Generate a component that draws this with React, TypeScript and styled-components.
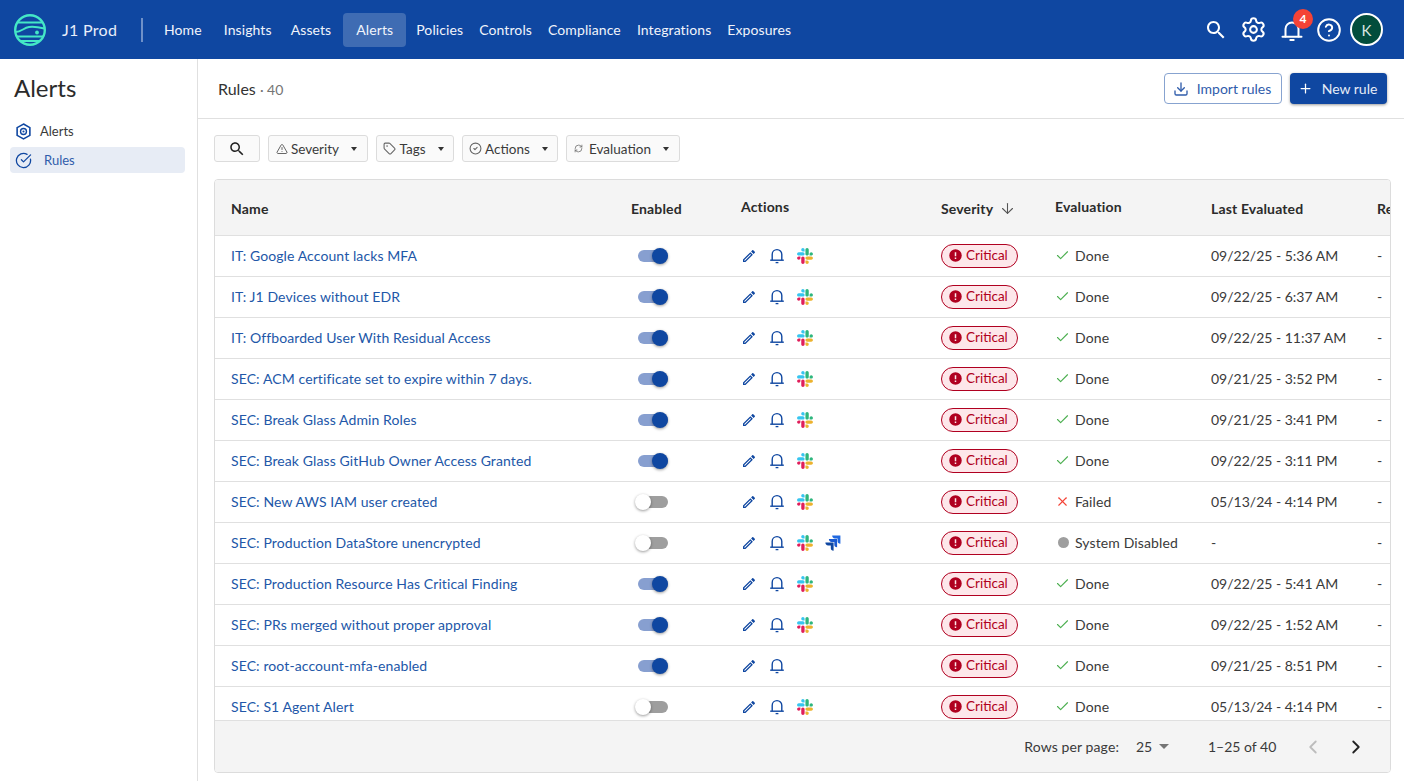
import React from 'react';
import styled, { createGlobalStyle } from 'styled-components';
import { Settings, CircleHelp, Plus, Download, ChevronLeft, ChevronRight, ArrowDown, Check, X, TriangleAlert, Tag, CircleCheck, CircleCheckBig, RefreshCw } from 'lucide-react';

const Global = createGlobalStyle`
  html, body { margin: 0; padding: 0; height: 100%; background: #fff; overflow: hidden; }
  body { font-family: Lato, "Open Sans", sans-serif; color: #2b2b2b; }
  * { box-sizing: border-box; }
`;
const Page = styled.div`width: 1404px; height: 781px; display: flex; flex-direction: column; overflow: hidden;`;
const TopBar = styled.header`height: 59px; flex: none; background: #0f47a1; display: flex; align-items: center; padding: 0 21px 0 14px; color: #fff;`;
const Logo = styled.svg`width: 34px; height: 34px; flex: none;`;
const Brand = styled.div`font-size: 16px; letter-spacing: 0.3px; margin-left: 14px; width: 79px; color: #e8eefa;`;
const Divider = styled.div`width: 2px; height: 24px; background: #6f91c9; margin-right: 13px;`;
const Nav = styled.nav`display: flex; align-items: center;`;
const NavItem = styled.div<{ $active?: boolean; $before?: number; $after?: number }>`
  font-size: 14px; letter-spacing: 0.1px; height: 34px; display: flex; align-items: center; padding: 0 ${p => (p.$active ? '13px' : '8px')};
  margin-left: ${p => p.$before || 0}px; margin-right: ${p => p.$after || 0}px; border-radius: 4px; color: #f1f4fb;
  background: ${p => (p.$active ? '#3f6cb3' : 'transparent')};
`;
const TopActions = styled.div`margin-left: auto; display: flex; align-items: center;`;
const TopIcon = styled.div<{ $w: number }>`width: ${p => p.$w}px; display: flex; justify-content: center; position: relative;`;
const TopSvg = styled.svg<{ $s: number }>`width: ${p => p.$s}px; height: ${p => p.$s}px; display: block;`;
const Badge = styled.span`position: absolute; top: -9px; left: 20px; width: 20px; height: 20px; border-radius: 50%; background: #f44336; color: #fff; font-size: 12px; font-weight: 700; display: flex; align-items: center; justify-content: center;`;
const Avatar = styled.div`width: 33px; height: 33px; border-radius: 50%; background: #024d3c; border: 2px solid #fff; color: #d8e6e0; display: flex; align-items: center; justify-content: center; font-size: 15px; margin-left: 3px;`;
const Body = styled.div`flex: 1; display: flex; min-height: 0;`;
const Sidebar = styled.aside`width: 198px; flex: none; border-right: 1px solid #e0e0e0; padding: 0 12px 0 10px;`;
const SideTitle = styled.h1`font-size: 24px; font-weight: 400; margin: 0; padding: 14px 0 0 4px; height: 59px; line-height: 30px; color: #2b2b2b;`;
const SideItem = styled.div<{ $active?: boolean }>`
  height: 26px; margin-bottom: 3px; display: flex; align-items: center; font-size: 13px; border-radius: 4px; padding-left: 5px;
  color: ${p => (p.$active ? '#2f5cab' : '#3a3a3a')}; background: ${p => (p.$active ? '#e7ecf5' : 'transparent')};
  gap: ${p => (p.$active ? '12px' : '8px')};
  svg { flex: none; }
`;
const Main = styled.main`flex: 1; min-width: 0; display: flex; flex-direction: column; padding-bottom: 8px;`;
const MainHead = styled.div`height: 60px; flex: none; border-bottom: 1px solid #e0e0e0; display: flex; align-items: center; padding: 0 17px 0 20px;`;
const HeadTitle = styled.div`font-size: 16px; color: #333;`;
const HeadCount = styled.span`font-size: 14px; color: #757575;`;
const HeadActions = styled.div`margin-left: auto; display: flex; gap: 8px;`;
const OutlineBtn = styled.button`height: 31px; width: 118px; border: 1px solid #87a3d0; border-radius: 4px; background: #fff; color: #2f5cab; font: 14px Lato, sans-serif; display: flex; align-items: center; justify-content: center; gap: 8px; padding: 0 2px 0 0;`;
const SolidBtn = styled.button`height: 31px; width: 97px; border: none; border-radius: 4px; background: #0f47a1; color: #e6ecf7; font: 14px Lato, sans-serif; display: flex; align-items: center; justify-content: center; gap: 9px; padding: 0 2px 0 0; box-shadow: 0 1px 3px rgba(0,0,0,.4);`;
const Filters = styled.div`height: 60px; flex: none; display: flex; align-items: center; gap: 8px; padding: 0 0 1px 16px;`;
const Chip = styled.div<{ $w: number; $plain?: boolean }>`height: 27px; width: ${p => p.$w}px; border: 1px solid #dcdcdc; border-radius: 3px; background: #fafafa; display: flex; align-items: center; justify-content: center; gap: 3px; padding-right: ${p => (p.$plain ? 0 : 3)}px; font-size: 13.5px; color: #3a3a3a; svg { flex: none; }`;
const Caret = styled.span<{ $color?: string; $w?: number }>`width: 0; height: 0; border-left: ${p => (p.$w || 7) / 2}px solid transparent; border-right: ${p => (p.$w || 7) / 2}px solid transparent; border-top: ${p => ((p.$w || 7) > 7 ? 5 : 4)}px solid ${p => p.$color || '#333'}; margin-left: ${p => ((p.$w || 7) > 7 ? 7 : 9)}px;`;
const TableCard = styled.div`flex: 1; min-height: 0; margin: 0 13px 0 16px; border: 1px solid #dcdcdc; border-radius: 4px; display: flex; flex-direction: column; overflow: hidden;`;
const Scroller = styled.div`flex: 1; min-height: 0; overflow: hidden;`;
const Table = styled.table`border-collapse: collapse; table-layout: fixed; width: 1300px; font-size: 14px;`;
const Th = styled.th<{ $w: number; $up?: boolean }>`width: ${p => p.$w}px; height: 55px; background: #f4f4f4; border-bottom: 1px solid #e0e0e0; text-align: left; padding: ${p => (p.$up ? '0 0 2px 16px' : '3px 0 0 16px')}; font-weight: 700; font-size: 14px; letter-spacing: 0.15px; color: #2b2b2b; white-space: nowrap; overflow: hidden;`;
const SortLabel = styled.span`display: inline-flex; align-items: center; gap: 6px;`;
const Td = styled.td`height: 41px; border-bottom: 1px solid #e0e0e0; padding: 0 0 0 16px; white-space: nowrap; overflow: hidden; color: #3a3a3a;`;
const RuleLink = styled.a`color: #2257a8; font-size: 14px; letter-spacing: 0.1px;`;
const Toggle = styled.div<{ $on: boolean }>`position: relative; width: 30px; height: 12px; margin-left: 7px; border-radius: 6px; background: ${p => (p.$on ? '#879fd0' : '#9e9e9e')};`;
const Knob = styled.span<{ $on: boolean }>`position: absolute; top: -2px; width: 16px; height: 16px; border-radius: 50%; ${p => (p.$on ? 'right: 0; background: #0f47a1;' : 'left: -3px; background: #fff;')} box-shadow: 0 1px 3px rgba(0,0,0,.4);`;
const ActionIcons = styled.div`display: flex; align-items: center; gap: 12px;`;
const IconSlot = styled.svg`width: 16px; height: 16px; flex: none; display: block;`;
const Pill = styled.span`display: inline-flex; align-items: center; height: 24px; width: 77px; border: 1px solid #b00020; border-radius: 12px; background: #fde7ea; color: #b00020; font-size: 13.5px; padding: 0 0 1px 6px; gap: 3px;`;
const EvalCell = styled.div`display: flex; align-items: center; gap: 5px; font-size: 14px; letter-spacing: 0.12px;`;
const Dot = styled.span`width: 11px; height: 11px; margin: 0 1px 0 3px; border-radius: 50%; background: #9e9e9e;`;
const Footer = styled.div`height: 52px; flex: none; background: #f4f4f4; border-top: 1px solid #e0e0e0; display: flex; align-items: center; justify-content: flex-end; padding: 0 23px 0 0; font-size: 14px; color: #3a3a3a;`;
const RowsLabel = styled.span`letter-spacing: 0.1px;`;
const PageSize = styled.div`display: flex; align-items: center; margin-left: 17px; width: 53px;`;
const PageRange = styled.span`margin-left: 19px; width: 87px;`;
const PageNav = styled.div`display: flex; align-items: center; gap: 21px; margin-left: 7px;`;

const navItems: { label: string; before?: number; after?: number; active?: boolean }[] = [
  { label: 'Home', after: 6 },
  { label: 'Insights', after: 3 },
  { label: 'Assets' },
  { label: 'Alerts', before: 4, after: 2, active: true },
  { label: 'Policies' },
  { label: 'Controls' },
  { label: 'Compliance' },
  { label: 'Integrations' },
  { label: 'Exposures' },
];

const rows: [string, boolean, boolean, boolean, string, string][] = [
  ['IT: Google Account lacks MFA', true, true, false, 'Done', '09/22/25 - 5:36 AM'],
  ['IT: J1 Devices without EDR', true, true, false, 'Done', '09/22/25 - 6:37 AM'],
  ['IT: Offboarded User With Residual Access', true, true, false, 'Done', '09/22/25 - 11:37 AM'],
  ['SEC: ACM certificate set to expire within 7 days.', true, true, false, 'Done', '09/21/25 - 3:52 PM'],
  ['SEC: Break Glass Admin Roles', true, true, false, 'Done', '09/21/25 - 3:41 PM'],
  ['SEC: Break Glass GitHub Owner Access Granted', true, true, false, 'Done', '09/22/25 - 3:11 PM'],
  ['SEC: New AWS IAM user created', false, true, false, 'Failed', '05/13/24 - 4:14 PM'],
  ['SEC: Production DataStore unencrypted', false, true, true, 'System Disabled', '-'],
  ['SEC: Production Resource Has Critical Finding', true, true, false, 'Done', '09/22/25 - 5:41 AM'],
  ['SEC: PRs merged without proper approval', true, true, false, 'Done', '09/22/25 - 1:52 AM'],
  ['SEC: root-account-mfa-enabled', true, false, false, 'Done', '09/21/25 - 8:51 PM'],
  ['SEC: S1 Agent Alert', false, true, false, 'Done', '05/13/24 - 4:14 PM'],
];

const MuiSearch = ({ size, color }: { size: number; color: string }) => (
  <TopSvg $s={size} viewBox="0 0 24 24" fill={color}>
    <path d="M15.5 14h-.79l-.28-.27C15.41 12.59 16 11.11 16 9.5 16 5.91 13.09 3 9.5 3S3 5.91 3 9.5 5.91 16 9.5 16c1.61 0 3.09-.59 4.23-1.57l.27.28v.79l5 4.99L20.49 19l-4.99-5zm-6 0C7.01 14 5 11.99 5 9.5S7.01 5 9.5 5 14 7.01 14 9.5 11.99 14 9.5 14z" />
  </TopSvg>
);
const TopBell = () => (
  <TopSvg $s={24} viewBox="0 0 24 24" fill="none" stroke="#fff" strokeWidth="2" strokeLinecap="round">
    <path d="M5.5 18.5V11a6.5 6.5 0 0 1 13 0v7.5" />
    <path d="M2.5 18.8h19" />
    <path d="M10.3 22h3.4" />
  </TopSvg>
);
const PencilIcon = () => (
  <IconSlot viewBox="0 0 24 24" fill="#0f47a1"><path d="M14.06 9.02l.92.92L5.92 19H5v-.92l9.06-9.06M17.66 3c-.25 0-.51.1-.7.29l-1.83 1.83 3.75 3.75 1.83-1.83c.39-.39.39-1.02 0-1.41l-2.34-2.34c-.2-.2-.45-.29-.71-.29zm-3.6 3.19L3 17.25V21h3.75L17.81 9.94l-3.75-3.75z" /></IconSlot>
);
const BellIcon = () => (
  <IconSlot viewBox="0 0 16 16" fill="none" stroke="#0f47a1" strokeWidth="1.4">
    <path d="M3.2 12V6.4a4.8 4.8 0 0 1 9.6 0V12" /><path d="M1.2 12.2h13.6" /><path d="M6.6 14.6h2.8" strokeWidth="1.3" />
  </IconSlot>
);
const SlackIcon = () => (
  <IconSlot viewBox="0 0 127 127">
    <path d="M27.2 80c0 7.3-5.9 13.2-13.2 13.2C6.7 93.2.8 87.3.8 80c0-7.3 5.9-13.2 13.2-13.2h13.2V80zm6.6 0c0-7.3 5.9-13.2 13.2-13.2 7.3 0 13.2 5.9 13.2 13.2v33c0 7.3-5.9 13.2-13.2 13.2-7.3 0-13.2-5.9-13.2-13.2V80z" fill="#E01E5A" />
    <path d="M47 27c-7.3 0-13.2-5.9-13.2-13.2C33.8 6.5 39.7.6 47 .6c7.3 0 13.2 5.9 13.2 13.2V27H47zm0 6.7c7.3 0 13.2 5.9 13.2 13.2 0 7.3-5.9 13.2-13.2 13.2H13.9C6.6 60.1.7 54.2.7 46.9c0-7.3 5.9-13.2 13.2-13.2H47z" fill="#36C5F0" />
    <path d="M99.9 46.9c0-7.3 5.9-13.2 13.2-13.2 7.3 0 13.2 5.9 13.2 13.2 0 7.3-5.9 13.2-13.2 13.2H99.9V46.9zm-6.6 0c0 7.3-5.9 13.2-13.2 13.2-7.3 0-13.2-5.9-13.2-13.2V13.8C66.9 6.5 72.8.6 80.1.6c7.3 0 13.2 5.9 13.2 13.2v33.1z" fill="#2EB67D" />
    <path d="M80.1 99.8c7.3 0 13.2 5.9 13.2 13.2 0 7.3-5.9 13.2-13.2 13.2-7.3 0-13.2-5.9-13.2-13.2V99.8h13.2zm0-6.6c-7.3 0-13.2-5.9-13.2-13.2 0-7.3 5.9-13.2 13.2-13.2h33.1c7.3 0 13.2 5.9 13.2 13.2 0 7.3-5.9 13.2-13.2 13.2H80.1z" fill="#ECB22E" />
  </IconSlot>
);
const JiraIcon = () => (
  <IconSlot viewBox="0 0 16 16">
    <path d="M7.2 .6h8.2v8.2a2.8 2.8 0 0 1-2.8-2.8V3.4H10A2.8 2.8 0 0 1 7.2 .6z" fill="#2068e0" />
    <path d="M3.9 4.1h8.2v8.2a2.8 2.8 0 0 1-2.8-2.8V6.9H6.7a2.8 2.8 0 0 1-2.8-2.8z" fill="#1a5ad0" />
    <path d="M.4 7.6h8.2v8.2a2.8 2.8 0 0 1-2.8-2.8v-2.6H3.2A2.8 2.8 0 0 1 .4 7.6z" fill="#0f47a1" />
  </IconSlot>
);
const AlertDot = () => (
  <svg width="15" height="15" viewBox="0 0 24 24" fill="#b00020"><path d="M12 2a10 10 0 1 0 0 20 10 10 0 0 0 0-20zm1.2 11.2h-2.4V6.8h2.4v6.4zm0 4.4h-2.4v-2.4h2.4v2.4z" /></svg>
);

const EvalStatus = ({ value }: { value: string }) => {
  if (value === 'Failed') return <EvalCell><X size={15} color="#f44336" strokeWidth={1.7} />{value}</EvalCell>;
  if (value === 'System Disabled') return <EvalCell><Dot />{value}</EvalCell>;
  return <EvalCell><Check size={15} color="#4caf50" strokeWidth={1.8} />{value}</EvalCell>;
};

export default function App() {
  return (
    <Page>
      <Global />
      <TopBar>
        <Logo viewBox="0 0 34 34" fill="none" stroke="#44e8c6" strokeWidth="2">
          <circle cx="16" cy="17" r="14.8" strokeWidth="2.4" />
          <path d="M3.5 9.5h25" />
          <path d="M1.5 19c6 0 8-4.2 13.5-5 4-.6 9 0 15.5 1.5" />
          <path d="M2.5 23.5h27" />
          <path d="M6 28h20" />
          <circle cx="23" cy="19.5" r="1.9" fill="#44e8c6" stroke="none" />
        </Logo>
        <Brand>J1 Prod</Brand>
        <Divider />
        <Nav>
          {navItems.map(n => (
            <NavItem key={n.label} $active={n.active} $before={n.before} $after={n.after}>{n.label}</NavItem>
          ))}
        </Nav>
        <TopActions>
          <TopIcon $w={34}><MuiSearch size={24} color="#fff" /></TopIcon>
          <TopIcon $w={40}><Settings size={27} color="#fff" strokeWidth={1.8} /></TopIcon>
          <TopIcon $w={38}>
            <TopBell />
            <Badge>4</Badge>
          </TopIcon>
          <TopIcon $w={36}><CircleHelp size={26} color="#fff" strokeWidth={1.8} /></TopIcon>
          <Avatar>K</Avatar>
        </TopActions>
      </TopBar>
      <Body>
        <Sidebar>
          <SideTitle>Alerts</SideTitle>
          <SideItem>
            <svg width="17" height="17" viewBox="0 0 16 16" fill="none" stroke="#0f47a1" strokeWidth="1.5">
              <path d="M8 1l6 3.4v7.2L8 15l-6-3.4V4.4z" /><circle cx="8" cy="8" r="2.8" strokeWidth="1.3" /><circle cx="8" cy="8" r="1" fill="#0f47a1" stroke="none" />
            </svg>
            Alerts
          </SideItem>
          <SideItem $active>
            <CircleCheckBig size={17} color="#0f47a1" strokeWidth={1.8} />
            Rules
          </SideItem>
        </Sidebar>
        <Main>
          <MainHead>
            <HeadTitle>Rules <HeadCount>· 40</HeadCount></HeadTitle>
            <HeadActions>
              <OutlineBtn><Download size={16} color="#2f5cab" />Import rules</OutlineBtn>
              <SolidBtn><Plus size={15} color="#fff" />New rule</SolidBtn>
            </HeadActions>
          </MainHead>
          <Filters>
            <Chip $w={46} $plain><MuiSearch size={18} color="#222" /></Chip>
            <Chip $w={100}><TriangleAlert size={12} color="#666" />Severity<Caret /></Chip>
            <Chip $w={78}><Tag size={13} color="#666" />Tags<Caret /></Chip>
            <Chip $w={96}><CircleCheck size={13} color="#666" />Actions<Caret /></Chip>
            <Chip $w={114}><RefreshCw size={9} color="#666" style={{ marginRight: 3 }} />Evaluation<Caret /></Chip>
          </Filters>
          <TableCard>
            <Scroller>
              <Table>
                <thead>
                  <tr>
                    <Th $w={400}>Name</Th>
                    <Th $w={110}>Enabled</Th>
                    <Th $w={200} $up>Actions</Th>
                    <Th $w={114}><SortLabel>Severity<ArrowDown size={17} color="#555" strokeWidth={1.5} /></SortLabel></Th>
                    <Th $w={156} $up>Evaluation</Th>
                    <Th $w={166}>Last Evaluated</Th>
                    <Th $w={154}>Resource</Th>
                  </tr>
                </thead>
                <tbody>
                  {rows.map(r => (
                    <tr key={r[0]}>
                      <Td><RuleLink>{r[0]}</RuleLink></Td>
                      <Td><Toggle $on={r[1]}><Knob $on={r[1]} /></Toggle></Td>
                      <Td>
                        <ActionIcons>
                          <PencilIcon />
                          <BellIcon />
                          {r[2] && <SlackIcon />}
                          {r[3] && <JiraIcon />}
                        </ActionIcons>
                      </Td>
                      <Td><Pill><AlertDot />Critical</Pill></Td>
                      <Td><EvalStatus value={r[4]} /></Td>
                      <Td>{r[5]}</Td>
                      <Td>-</Td>
                    </tr>
                  ))}
                </tbody>
              </Table>
            </Scroller>
            <Footer>
              <RowsLabel>Rows per page:</RowsLabel>
              <PageSize>25<Caret $color="#757575" $w={10} /></PageSize>
              <PageRange>1–25 of 40</PageRange>
              <PageNav>
                <ChevronLeft size={22} color="#bdbdbd" />
                <ChevronRight size={22} color="#222" />
              </PageNav>
            </Footer>
          </TableCard>
        </Main>
      </Body>
    </Page>
  );
}
